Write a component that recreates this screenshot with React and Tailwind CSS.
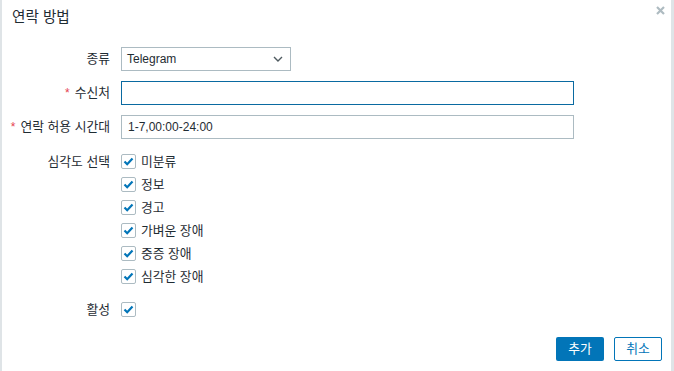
import React from "react";

const font = { fontFamily: '"Liberation Sans", Arial, "Noto Sans CJK KR", sans-serif' };

function Check() {
  return (
    <div className="w-[15px] h-[15px] border border-[#acbbc2] rounded-[2px] bg-white flex items-center justify-center shrink-0">
      <svg width="11" height="11" viewBox="0 0 11 11">
        <path d="M1.5 5.5 L4.2 8.2 L9.5 2.5" fill="none" stroke="#0275b8" strokeWidth="2.2" />
      </svg>
    </div>
  );
}

function Label({ req, children }) {
  return (
    <div className="w-[108px] shrink-0 text-right text-[12.8px] text-[#1f2c33] whitespace-nowrap">
      {req && <span className="text-[#e54251] mr-[5px] text-[12px]">*</span>}
      {children}
    </div>
  );
}

export default function App() {
  const sev = ["미분류", "정보", "경고", "가벼운 장애", "중증 장애", "심각한 장애"];
  return (
    <div style={font} className="w-[674px] h-[371px] bg-[#dfe4e7] flex pl-[2px] pr-[3px] overflow-hidden">
      <div className="flex-1 bg-white relative flex flex-col">
        <div className="h-[36px] flex items-center pl-[10px] text-[14.6px] text-[#1f2c33]">연락 방법</div>
        <button className="absolute right-[6px] top-[5px] w-[10px] h-[10px] flex items-center justify-center">
          <svg width="9" height="9" viewBox="0 0 9 9">
            <path d="M1 1 L8 8 M8 1 L1 8" stroke="#aebbc1" strokeWidth="2.2" />
          </svg>
        </button>

        <div className="flex flex-col mt-[11px]">
          <div className="flex items-center h-[24px]">
            <Label>종류</Label>
            <div className="ml-[11px] w-[170px] h-[24px] border border-[#acbbc2] flex items-center justify-between pl-[5px] pr-[7px] text-[12px] text-[#1f2c33]">
              <span>Telegram</span>
              <svg width="10" height="6" viewBox="0 0 10 6">
                <path d="M1 1 L5 5 L9 1" fill="none" stroke="#4f5a60" strokeWidth="1.4" />
              </svg>
            </div>
          </div>

          <div className="flex items-center h-[24px] mt-[10px]">
            <Label req>수신처</Label>
            <div className="ml-[11px] w-[453px] h-[24px] border border-[#0a6aa1]" />
          </div>

          <div className="flex items-center h-[24px] mt-[10px]">
            <Label req>연락 허용 시간대</Label>
            <div className="ml-[11px] w-[453px] h-[24px] border border-[#acbbc2] flex items-center pl-[6px] text-[12px] text-[#1f2c33]">
              1-7,00:00-24:00
            </div>
          </div>

          <div className="flex mt-[15px]">
            <div className="h-[15px] flex items-center">
              <Label>심각도 선택</Label>
            </div>
            <div className="ml-[11px] flex flex-col gap-[8px]">
              {sev.map((s) => (
                <div key={s} className="flex items-center h-[15px]">
                  <Check />
                  <span className="ml-[5px] text-[12.8px] text-[#1f2c33]">{s}</span>
                </div>
              ))}
            </div>
          </div>

          <div className="flex items-center h-[15px] mt-[18px]">
            <Label>활성</Label>
            <div className="ml-[11px]">
              <Check />
            </div>
          </div>
        </div>

        <div className="mt-auto mb-[10px] flex justify-end pr-[9px] gap-[10px]">
          <button className="w-[48px] h-[24px] bg-[#0275b8] rounded-[2px] text-white text-[12.8px] flex items-center justify-center">추가</button>
          <button className="w-[48px] h-[24px] border border-[#0275b8] rounded-[2px] text-[#0275b8] text-[12.8px] flex items-center justify-center">취소</button>
        </div>
      </div>
    </div>
  );
}
